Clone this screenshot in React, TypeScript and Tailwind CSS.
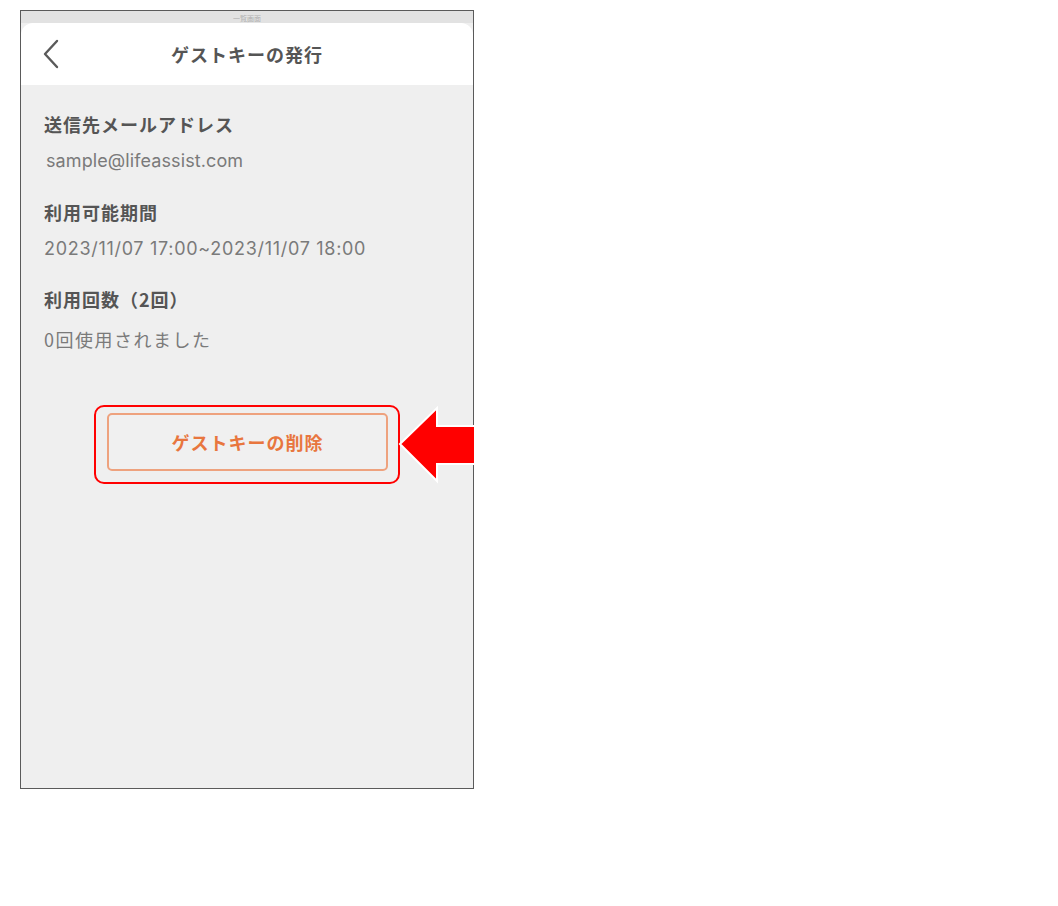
import React from "react";

const jp = { fontFamily: '"Noto Sans CJK JP", "Noto Sans", sans-serif' };
const val = { fontFamily: 'Inter, "Noto Sans CJK JP", sans-serif' };

export default function App() {
  return (
    <div className="min-h-[906px] w-[1058px] bg-white pl-[20px] pt-[10px]" style={jp}>
      <div className="relative flex h-[779px] w-[454px] flex-col border border-[#5a5a5a] bg-[#efefef]">
        {/* top strip of underlying sheet */}
        <div className="flex h-[12px] items-start justify-center bg-[#e2e2e2]">
          <span className="mt-[3px] text-[7px] leading-[8px] text-[#9a9a9a] opacity-70">一覧画面</span>
        </div>
        {/* sheet header */}
        <div className="relative flex h-[62px] items-center justify-center rounded-t-[12px] bg-white">
          <svg className="absolute left-[21px] top-[16px]" width="17" height="30" viewBox="0 0 17 30">
            <path d="M15 2 L3 15 L15 28" fill="none" stroke="#5a5a5a" strokeWidth="2.4" strokeLinecap="round" strokeLinejoin="round" />
          </svg>
          <span className="text-[18px] font-bold leading-[24px] tracking-[1px] text-[#555]">ゲストキーの発行</span>
        </div>
        {/* body */}
        <div className="flex flex-1 flex-col pl-[23px] pt-[27px]">
          <div className="text-[18px] font-bold leading-[24px] tracking-[1px] text-[#555]">送信先メールアドレス</div>
          <div className="mt-[13px] pl-[2px] text-[18px] leading-[24px] tracking-[0.1px] text-[#7a7a7a]" style={val}>sample@lifeassist.com</div>
          <div className="mt-[27px] text-[18px] font-bold leading-[24px] tracking-[1px] text-[#555]">利用可能期間</div>
          <div className="mt-[13px] text-[18px] leading-[24px] tracking-[0.7px] text-[#7a7a7a]" style={val}>2023/11/07 17:00~2023/11/07 18:00</div>
          <div className="mt-[26px] text-[18px] font-bold leading-[24px] tracking-[1px] text-[#555]">利用回数（2回）</div>
          <div className="mt-[16px] text-[18px] leading-[24px] tracking-[1.5px] text-[#7a7a7a]">0回使用されました</div>

          <div className="-ml-[23px] mt-[54px] flex justify-center">
            <div className="rounded-[10px] border-2 border-[#ff0000] pb-[11px] pl-[11px] pr-[10px] pt-[6px]">
              <div className="flex h-[58px] w-[281px] items-center justify-center rounded-[5px] border-2 border-[#eea27e] bg-[#f0f0f0]">
                <span className="text-[18px] font-bold leading-[24px] tracking-[1px] text-[#e8763e]">ゲストキーの削除</span>
              </div>
            </div>
          </div>
        </div>

        {/* annotation arrow */}
        <svg className="absolute left-[376px] top-[393px]" width="78" height="82" viewBox="0 0 78 82">
          <path
            d="M3 40 L40 4 L40 22 L78 22 L78 60 L40 60 L40 77 Z"
            fill="#ff0000"
            stroke="#ffffff"
            strokeWidth="2"
            strokeLinejoin="miter"
          />
        </svg>
      </div>
    </div>
  );
}
